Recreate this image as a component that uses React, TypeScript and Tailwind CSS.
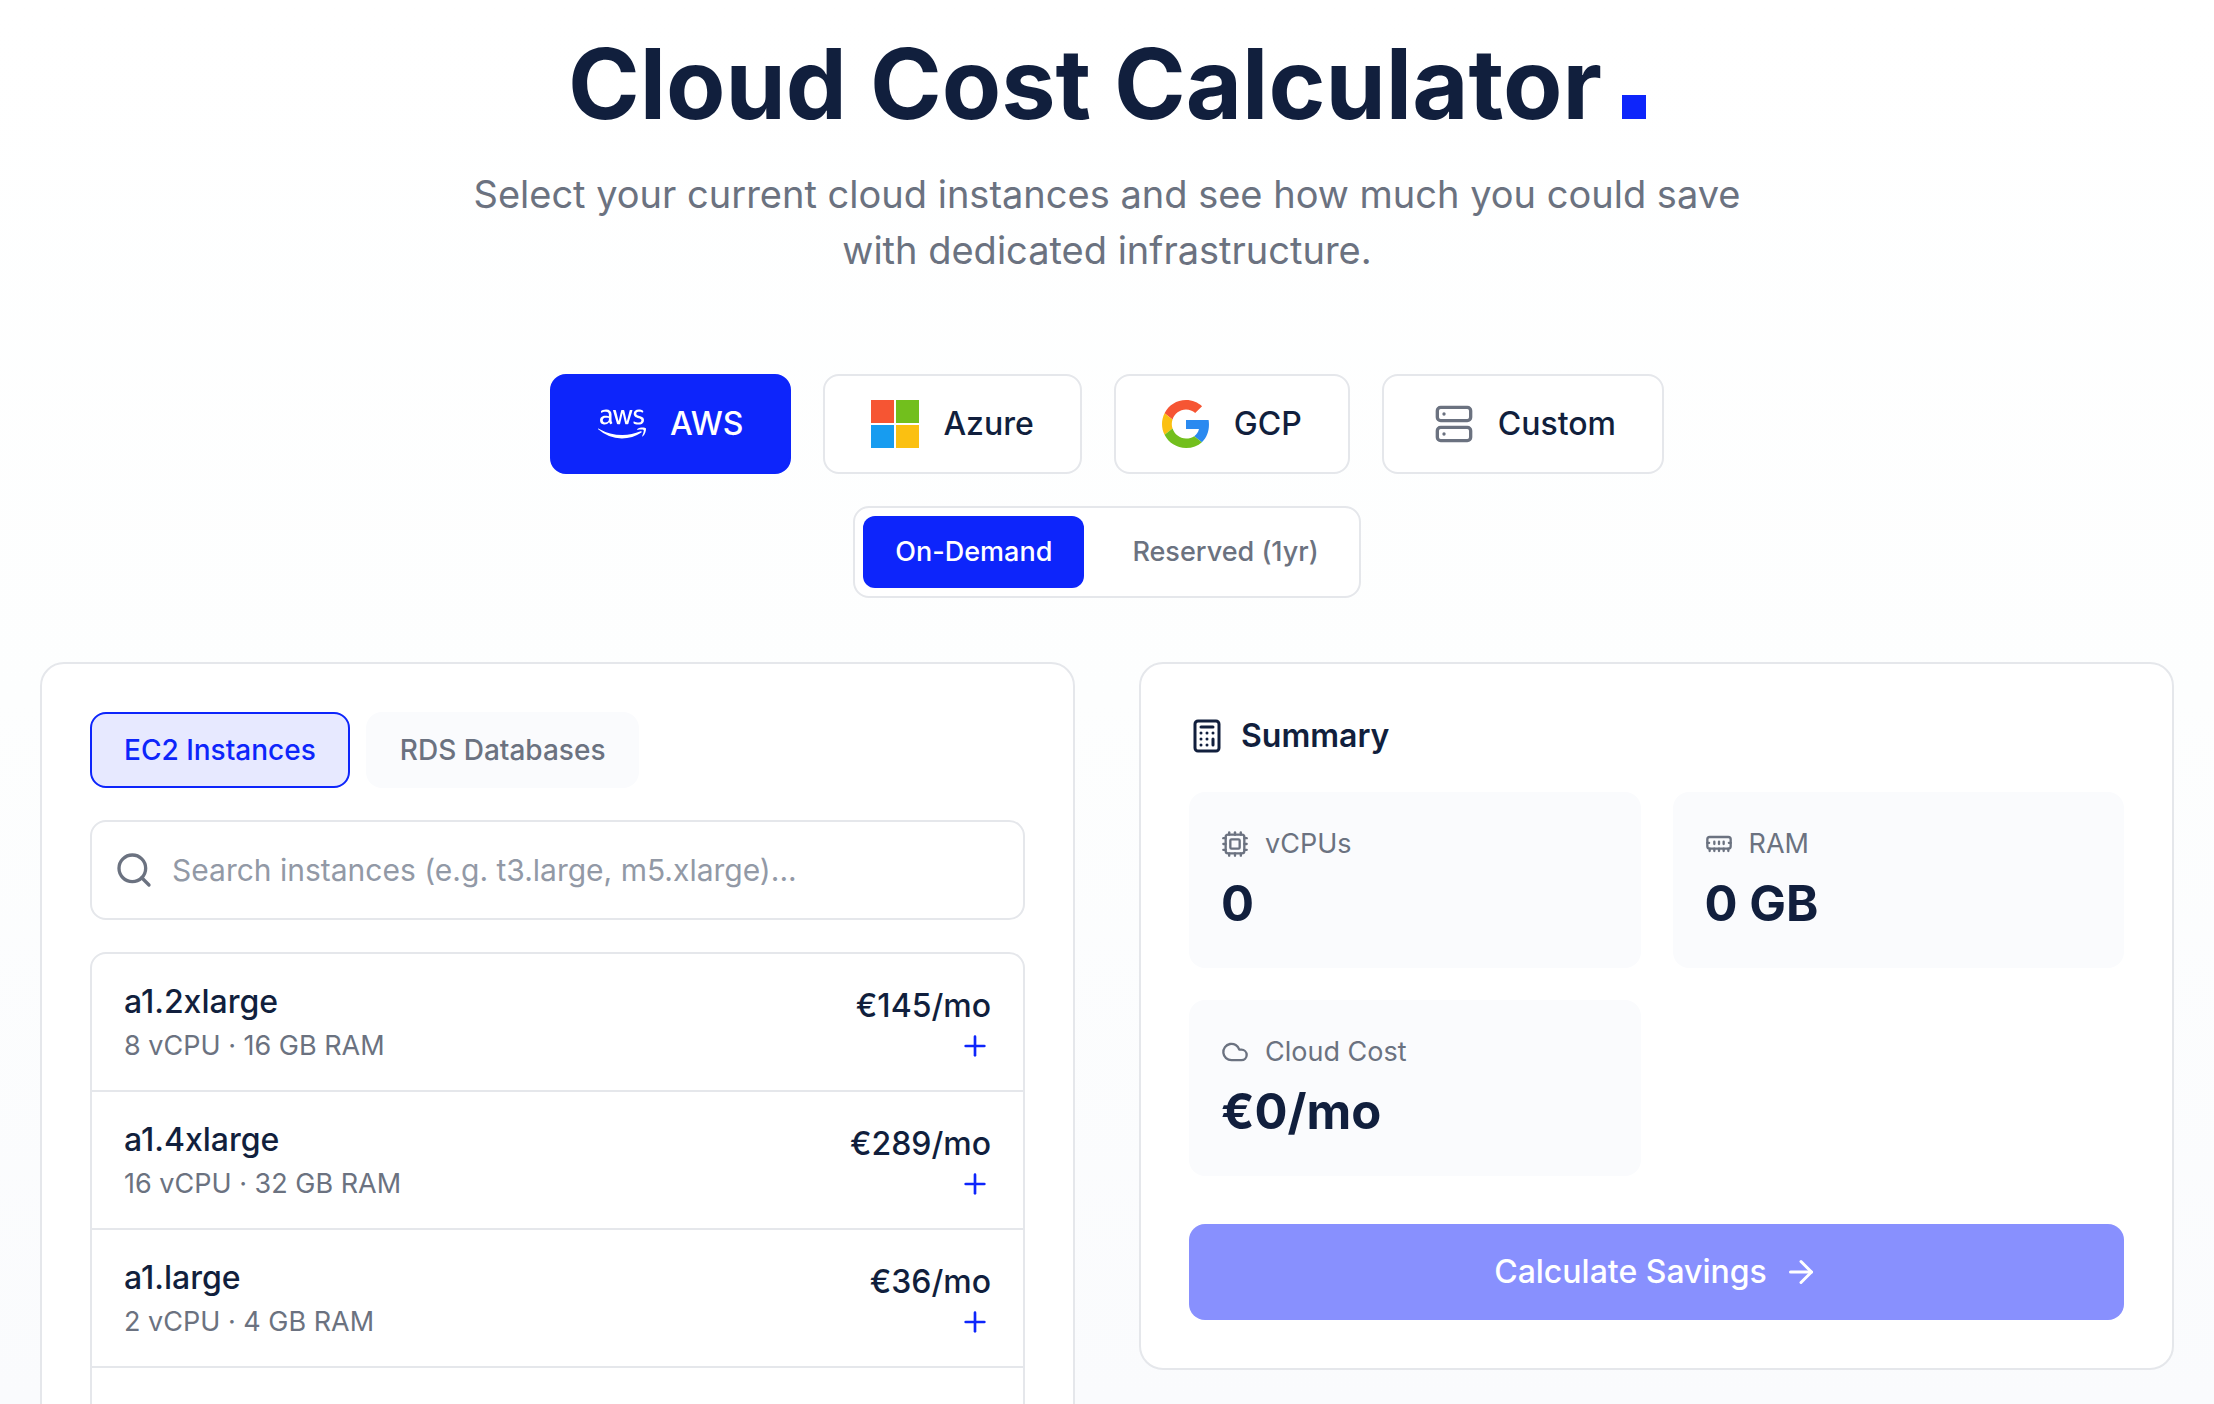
import { useState } from "react";
import type { ReactNode } from "react";
import { ArrowRight, Calculator, Cloud, Cpu, MemoryStick, Plus, Search, Server } from "lucide-react";
import { FaAws } from "react-icons/fa";

const INSTANCES = [
  { name: "a1.2xlarge", vcpu: 8, ram: 16, price: 145 },
  { name: "a1.4xlarge", vcpu: 16, ram: 32, price: 289 },
  { name: "a1.large", vcpu: 2, ram: 4, price: 36 },
];

function AzureLogo() {
  return (
    <svg viewBox="0 0 48 48" className="size-12" aria-hidden="true">
      <path fill="#f65533" d="M0 0h23v23H0z" />
      <path fill="#72bf1d" d="M25 0h23v23H25z" />
      <path fill="#179cf0" d="M0 25h23v23H0z" />
      <path fill="#fbc011" d="M25 25h23v23H25z" />
    </svg>
  );
}

function GoogleLogo() {
  return (
    <svg viewBox="0 0 48 48" className="size-12" aria-hidden="true">
      <path fill="#f65533" d="M24 9.5c3.54 0 6.71 1.22 9.21 3.6l6.85-6.85C35.9 2.38 30.47 0 24 0 14.62 0 6.51 5.38 2.56 13.22l7.98 6.19C12.43 13.72 17.74 9.5 24 9.5z" />
      <path fill="#2b8af0" d="M46.98 24.55c0-1.57-.15-3.09-.38-4.55H24v9.02h12.94c-.58 2.96-2.26 5.48-4.78 7.18l7.73 6c4.51-4.18 7.09-10.36 7.09-17.65z" />
      <path fill="#fbc011" d="M10.53 28.59c-.48-1.45-.76-2.99-.76-4.59s.27-3.14.76-4.59l-7.98-6.19C.92 16.46 0 20.12 0 24c0 3.88.92 7.54 2.56 10.78l7.97-6.19z" />
      <path fill="#72bf1d" d="M24 48c6.48 0 11.93-2.13 15.89-5.81l-7.73-6c-2.15 1.45-4.92 2.3-8.16 2.3-6.26 0-11.57-4.22-13.47-9.91l-7.98 6.19C6.51 42.62 14.62 48 24 48z" />
    </svg>
  );
}

const PROVIDERS = [
  { id: "AWS", icon: <FaAws className="size-12" /> },
  { id: "Azure", icon: <AzureLogo /> },
  { id: "GCP", icon: <GoogleLogo /> },
  { id: "Custom", icon: <Server className="ml-1 size-10 text-[#6b7280]" /> },
];

interface StatProps {
  icon: ReactNode;
  label: string;
  value: string;
}

function Stat({ icon, label, value }: StatProps) {
  return (
    <div className="h-44 rounded-2xl bg-[#fafbfd] p-8">
      <div className="flex h-10 items-center gap-4 text-[27px] leading-10 text-[#6b7280]">
        {icon}
        {label}
      </div>
      <p className="mt-2 text-[49px] leading-16 font-bold">{value}</p>
    </div>
  );
}

export default function App() {
  const [provider, setProvider] = useState("AWS");
  const [plan, setPlan] = useState("On-Demand");
  const [tab, setTab] = useState("EC2 Instances");

  return (
    <main className="h-screen overflow-hidden bg-linear-to-b from-white via-[#fdfefe] to-[#fafbfd] px-10 pt-8 font-['Inter',sans-serif] text-[#111f3d]">
      <header className="text-center">
        <h1 className="flex items-baseline justify-center gap-5 text-[97px] leading-[104px] font-bold">
          Cloud Cost Calculator
          <span className="size-6 bg-[#0d25fb]" />
        </h1>
        <p className="mx-auto mt-[30px] max-w-[1344px] text-[38px] leading-14 text-[#6b7280]">
          Select your current cloud instances and see how much you could save{" "}
          <br />
          with dedicated infrastructure.
        </p>
      </header>

      <div className="mt-24 flex justify-center gap-8">
        {PROVIDERS.map(({ id, icon }) => (
          <button
            key={id}
            onClick={() => setProvider(id)}
            className={`flex h-25 items-center gap-6 rounded-2xl border-2 px-[46px] text-[32px] font-medium ${
              provider === id ? "border-[#0d25fb] bg-[#0d25fb] text-white" : "border-[#e5e7eb] bg-white"
            }`}
          >
            {icon}
            {id}
          </button>
        ))}
      </div>

      <div className="mt-8 flex justify-center">
        <div className="flex gap-4 rounded-2xl border-2 border-[#e5e7eb] bg-white p-2">
          {["On-Demand", "Reserved (1yr)"].map((name) => (
            <button
              key={name}
              onClick={() => setPlan(name)}
              className={`h-18 rounded-xl px-8 text-[27px] font-medium ${
                plan === name ? "bg-[#0d25fb] text-white" : "text-[#6b7280]"
              }`}
            >
              {name}
            </button>
          ))}
        </div>
      </div>

      <div className="mt-16 grid grid-cols-2 items-start gap-16">
        <section className="rounded-3xl border-2 border-[#e5e7eb] bg-white p-12">
          <div className="flex gap-4">
            {["EC2 Instances", "RDS Databases"].map((name) => (
              <button
                key={name}
                onClick={() => setTab(name)}
                className={`h-19 rounded-2xl border-2 px-8 text-[28px] font-medium ${
                  tab === name
                    ? "border-[#0d25fb] bg-[#e7e9ff] text-[#0d25fb]"
                    : "border-transparent bg-[#fafbfd] text-[#6b7280]"
                }`}
              >
                {name}
              </button>
            ))}
          </div>

          <label className="mt-8 flex h-25 items-center gap-[18px] rounded-2xl border-2 border-[#e5e7eb] px-[22px]">
            <Search className="size-10 shrink-0 text-[#6b7280]" />
            <input
              type="text"
              aria-label="Search instances"
              placeholder="Search instances (e.g. t3.large, m5.xlarge)..."
              className="w-full text-[30px] outline-none placeholder:text-[#9299a6]"
            />
          </label>

          <ul className="mt-8 min-h-[640px] overflow-hidden rounded-2xl border-2 border-[#e5e7eb]">
            {INSTANCES.map((item) => (
              <li key={item.name} className="flex items-center justify-between border-b-2 border-[#e5e7eb] px-8 py-6">
                <div>
                  <p className="text-[32px] leading-12 font-medium">{item.name}</p>
                  <p className="text-[27px] leading-10 text-[#6b7280]">
                    {item.vcpu} vCPU · {item.ram} GB RAM
                  </p>
                </div>
                <div className="flex flex-col items-end">
                  <p className="text-[32px] leading-12 font-medium">€{item.price}/mo</p>
                  <button aria-label={`Add ${item.name}`} className="text-[#0d25fb]">
                    <Plus className="size-8" />
                  </button>
                </div>
              </li>
            ))}
          </ul>
        </section>

        <section className="rounded-3xl border-2 border-[#e5e7eb] bg-white p-12">
          <h2 className="flex h-12 items-center gap-4 text-[32px] font-semibold">
            <Calculator className="size-9" />
            Summary
          </h2>
          <div className="mt-8 grid grid-cols-2 gap-8">
            <Stat icon={<Cpu className="size-7" />} label="vCPUs" value="0" />
            <Stat icon={<MemoryStick className="size-7" />} label="RAM" value="0 GB" />
            <Stat icon={<Cloud className="size-7" />} label="Cloud Cost" value="€0/mo" />
          </div>
          <button
            disabled
            className="mt-12 flex h-24 w-full items-center justify-center gap-4 rounded-2xl bg-[#8890fe] text-[32px] font-medium text-white"
          >
            Calculate Savings
            <ArrowRight className="size-9" />
          </button>
        </section>
      </div>
    </main>
  );
}
